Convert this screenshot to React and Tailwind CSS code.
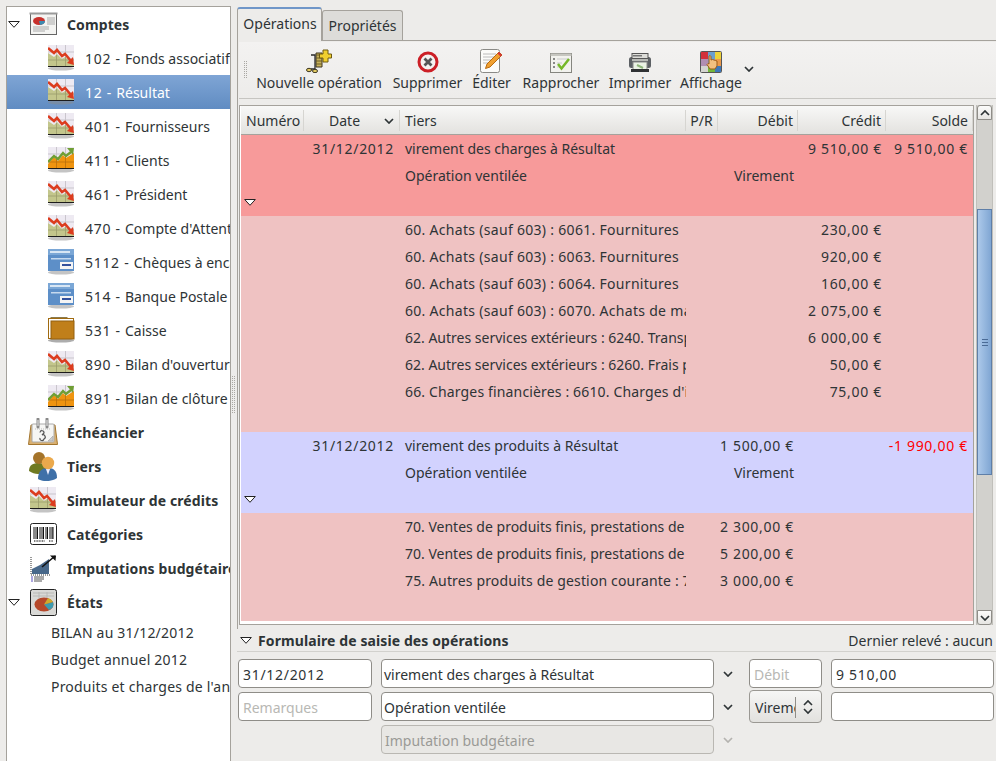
const FONT = "font-['Noto_Sans',sans-serif]"

// --- petites icones dessinees ---

function ChartDown() {
  return (
    <svg width="27" height="26" viewBox="0 0 27 26" className="shrink-0">
      <ellipse cx="13" cy="23.5" rx="13" ry="2" fill="#8a8a8a" opacity="0.5" />
      <rect x="0" y="0" width="26" height="21" fill="#eeeaf2" />
      <path d="M8.5 0V21M17.5 0V21M0 7H26M0 14H26" stroke="#c9c5cc" strokeWidth="1" />
      <path d="M0 8L6 12L9 9L14 14L17 12L26 20V21H0Z" fill="#c3c68c" />
      <path d="M8.5 10V21M17.5 12V21M0 15H26" stroke="#9a9c6c" strokeWidth="0.8" />
      <path d="M0 3L6 8L9 5L14 11L17 9L23 16" fill="none" stroke="#dc3c1e" strokeWidth="2.6" />
      <path d="M19 18L26 20L25 12Z" fill="#dc3c1e" />
      <rect x="0" y="21" width="26" height="1" fill="#1c1c1c" />
    </svg>
  )
}

function ChartUp() {
  return (
    <svg width="27" height="26" viewBox="0 0 27 26" className="shrink-0">
      <ellipse cx="13" cy="23.5" rx="13" ry="2" fill="#8a8a8a" opacity="0.5" />
      <rect x="0" y="0" width="26" height="21" fill="#eeeaf2" />
      <path d="M8.5 0V21M17.5 0V21M0 7H26M0 14H26" stroke="#c9c5cc" strokeWidth="1" />
      <path d="M0 17L6 10L10 14L15 8L18 11L26 6V21H0Z" fill="#ef9410" />
      <path d="M8.5 12V21M17.5 10V21M0 15H26" stroke="#b9700c" strokeWidth="0.8" />
      <path d="M0 15L6 9L10 12L15 6L18 9L23 5" fill="none" stroke="#6f9e34" strokeWidth="2.4" />
      <path d="M19 1L26 1L25 8Z" fill="#6f9e34" />
      <rect x="0" y="21" width="26" height="1" fill="#1c1c1c" />
    </svg>
  )
}

function BankCard() {
  return (
    <svg width="27" height="26" viewBox="0 0 27 26" className="shrink-0">
      <ellipse cx="13" cy="23.5" rx="13" ry="2" fill="#8a8a8a" opacity="0.5" />
      <rect x="0" y="0" width="26" height="22" fill="#5d8fc8" />
      <rect x="0" y="0" width="26" height="6" fill="#7ba7d6" />
      <rect x="2" y="2" width="20" height="2" fill="#d8e6f4" />
      <rect x="3" y="9" width="20" height="1.5" fill="#c6d9ee" />
      <rect x="12" y="13" width="13" height="7" fill="#f4f4f4" />
      <rect x="14" y="15" width="9" height="2" fill="#33509c" />
    </svg>
  )
}

function Cash() {
  return (
    <svg width="27" height="26" viewBox="0 0 27 26" className="shrink-0">
      <ellipse cx="13" cy="23.5" rx="13" ry="2" fill="#777" opacity="0.6" />
      <rect x="3" y="0.5" width="16" height="5" fill="#f2f0e8" stroke="#8a7a50" />
      <rect x="0.5" y="1.5" width="25" height="20" fill="#fff" stroke="#a06a10" />
      <rect x="3" y="4" width="23" height="18" fill="#c07f1a" stroke="#94600f" />
    </svg>
  )
}

function Presentation() {
  return (
    <svg width="29" height="24" viewBox="0 0 29 24">
      <rect x="1.5" y="1.5" width="26" height="21" fill="#f4f4f2" stroke="#666" />
      <rect x="0.5" y="0.5" width="28" height="2" fill="#9a9a9a" />
      <ellipse cx="10" cy="9" rx="6" ry="4" fill="#c8302c" />
      <path d="M10 9L16 9A6 4 0 0 1 11 13Z" fill="#3f8ab0" />
      <path d="M18 6H26M18 8H26M18 10H26M18 12H26M4 15H20M4 17H20M4 19H16" stroke="#aaa" />
    </svg>
  )
}

function Calendar() {
  return (
    <svg width="30" height="28" viewBox="0 0 30 28">
      <path d="M3 7H27L29.5 26.5H0.5Z" fill="#d9b071" stroke="#a3752e" />
      <rect x="4" y="6" width="22" height="18" rx="1" fill="#f6f6f4" stroke="#aaa" />
      <path d="M10 1V9M19 1V9" stroke="#888" strokeWidth="3" strokeLinecap="round" />
      <path d="M10 2V8M19 2V8" stroke="#eee" strokeWidth="1" />
      <path d="M7 11H23" stroke="#bbb" strokeDasharray="1 1" />
      <path d="M17 14.5A2 2 0 0 1 21 15L19 17A2 2 0 0 1 21 21A2 2 0 0 1 17 20" transform="translate(-5 0)" fill="none" stroke="#555" strokeWidth="1.2" />
      <path d="M20 23L25 18V23Z" fill="#ccc" stroke="#999" strokeWidth="0.5" />
    </svg>
  )
}

function People() {
  return (
    <svg width="29" height="29" viewBox="0 0 29 29">
      <path d="M0 19C0 13 4 11 10 11C15 11 18 14 18 19C12 23 6 23 0 19Z" fill="#6f7a22" />
      <circle cx="10" cy="6" r="6" fill="#a5742a" />
      <path d="M9 27C9 19 13 16 19 16C25 16 28 19 28 26C22 30 14 30 9 27Z" fill="#3f70a8" />
      <path d="M17 17H21L19 23Z" fill="#eef" />
      <circle cx="19" cy="11" r="6.2" fill="#eba94c" />
    </svg>
  )
}

function Barcode() {
  return (
    <svg width="27" height="22" viewBox="0 0 27 22">
      <rect x="0.5" y="0.5" width="26" height="21" rx="2" fill="#fff" stroke="#222" />
      <path d="M4 4V16M6 4V16M7.5 4V16M10 4V16M12 4V16M13.5 4V16M16 4V16M17.5 4V16M20 4V16M22 4V16M23 4V16" stroke="#111" strokeWidth="1" />
      <path d="M4 18H15M19 18H23" stroke="#555" strokeWidth="1.4" strokeDasharray="1 .6" />
    </svg>
  )
}

function Budget() {
  return (
    <svg width="27" height="27" viewBox="0 0 27 27">
      <path d="M1 2V20H20" fill="none" stroke="#333" strokeDasharray="1 1" />
      <path d="M2 14L10 10L19 4V19H2Z" fill="#48688a" />
      <path d="M12 12L25 1" stroke="#111" strokeWidth="1.6" />
      <path d="M20 0.5L26 0.5L25.5 6Z" fill="#111" />
      <path d="M4 22H14M4 24H14M4 26H12" stroke="#555" />
      <path d="M1 22H3M1 24H3M1 26H3" stroke="#5a4fc0" />
    </svg>
  )
}

function ReportIcon() {
  return (
    <svg width="27" height="27" viewBox="0 0 27 27">
      <rect x="0.5" y="0.5" width="26" height="26" rx="2" fill="#d9d9d6" stroke="#222" />
      <path d="M3 7H24M3 4H24M9 3V11M17 3V11" stroke="#b9b9b6" />
      <ellipse cx="14" cy="15.5" rx="9.5" ry="7" fill="#b5482a" />
      <path d="M14 15.5L23 13A9.5 7 0 0 1 19 21Z" fill="#3d9bb0" />
      <path d="M14 15.5L18 9A9.5 7 0 0 1 23 13Z" fill="#d0a92e" />
    </svg>
  )
}

function Triangle({ className = '' }) {
  return (
    <svg width="12" height="7" viewBox="0 0 12 7" className={className}>
      <path d="M0.7 0.5H11.3L6 6.3Z" fill="#fff" stroke="#222" />
    </svg>
  )
}

function Chevron({ color = '#2e3436' }) {
  return (
    <svg width="10" height="6" viewBox="0 0 10 6">
      <path d="M1 1L5 5L9 1" fill="none" stroke={color} strokeWidth="1.7" />
    </svg>
  )
}

function DotGrip({ cols, rows }) {
  const dots = []
  for (let c = 0; c < cols; c++) {
    for (let r = 0; r < rows; r++) {
      dots.push(<rect key={c + '-' + r} x={c * 2} y={r * 2} width="1" height="1" fill="#a9a7a2" />)
    }
  }
  return (
    <svg width={cols * 2} height={rows * 2}>
      {dots}
    </svg>
  )
}

// --- barre d'outils ---

function IconNew() {
  return (
    <svg width="26" height="24" viewBox="0 0 26 24">
      <path d="M10 4H16V18H10Z" fill="#c9b25a" stroke="#3c3520" />
      <path d="M10 6H16M10 9H16M10 12H16M10 15H16" stroke="#6b5d28" />
      <path d="M5 6H9V20H5" fill="none" stroke="#2a2a2a" strokeWidth="1.3" />
      <ellipse cx="3" cy="21" rx="2.5" ry="1.7" fill="#e3cb62" stroke="#3c3520" />
      <ellipse cx="9" cy="22" rx="2.5" ry="1.7" fill="#e3cb62" stroke="#3c3520" />
      <path d="M17 1H22V5H25.5V9H22V13H17V9H13.5V5H17Z" fill="#f0cf2f" stroke="#6e5a10" />
    </svg>
  )
}

function IconDelete() {
  return (
    <svg width="22" height="22" viewBox="0 0 22 22">
      <circle cx="11" cy="11" r="9" fill="#f4f2f0" stroke="#cc1f26" strokeWidth="3" />
      <path d="M7.5 7.5L14.5 14.5M14.5 7.5L7.5 14.5" stroke="#555" strokeWidth="2.8" />
    </svg>
  )
}

function IconEdit() {
  return (
    <svg width="23" height="24" viewBox="0 0 23 24">
      <rect x="0.5" y="0.5" width="19" height="23" rx="2" fill="#fbfbf9" stroke="#8a8a86" />
      <path d="M3 5H16M3 8H14M3 11H11M3 14H9" stroke="#bbb" />
      <path d="M19 3L22 6L10 18L5.5 19.5L7 15Z" fill="#f0a030" stroke="#b76a10" />
      <path d="M19 3L22 6L20.5 7.5L17.5 4.5Z" fill="#d6333a" />
    </svg>
  )
}

function IconCheck() {
  return (
    <svg width="22" height="20" viewBox="0 0 22 20">
      <rect x="0.5" y="0.5" width="21" height="19" fill="#f2f2ee" stroke="#85857f" />
      <rect x="0.5" y="0.5" width="21" height="2.5" fill="#c6c6c0" />
      <path d="M3 6H5M3 10H5M3 14H5" stroke="#666" strokeWidth="1.5" />
      <path d="M7 6H19M7 10H12M7 14H10" stroke="#ccc" />
      <path d="M8 11L11.5 15.5L19 6" fill="none" stroke="#76b82a" strokeWidth="2.5" />
    </svg>
  )
}

function IconPrint() {
  return (
    <svg width="22" height="20" viewBox="0 0 22 20">
      <rect x="0" y="4" width="22" height="11" rx="2.5" fill="#5c6064" />
      <rect x="3" y="0.5" width="16" height="5" fill="#dcdcd8" stroke="#555" />
      <rect x="4" y="2" width="9" height="1.5" fill="#777" />
      <rect x="3" y="6" width="16" height="2" fill="#b8bab6" />
      <rect x="4" y="9" width="14" height="9" fill="#eaf2e4" stroke="#888" />
      <path d="M8 12L14 15" stroke="#8fb67a" strokeWidth="2" />
      <rect x="2" y="16" width="18" height="3" fill="#2f3133" />
    </svg>
  )
}

function IconDisplay() {
  return (
    <svg width="22" height="22" viewBox="0 0 22 22">
      <rect x="0.5" y="0.5" width="21" height="21" rx="1" fill="#ddd" stroke="#555" />
      <rect x="1" y="1" width="7" height="7" fill="#d2303a" />
      <rect x="8" y="1" width="7" height="7" fill="#6a9fd0" />
      <rect x="15" y="1" width="6" height="7" fill="#edd23a" />
      <rect x="1" y="8" width="7" height="7" fill="#b08eb2" />
      <rect x="8" y="8" width="7" height="7" fill="#7aa6d0" />
      <rect x="15" y="8" width="6" height="7" fill="#eb9a4c" />
      <rect x="1" y="15" width="7" height="6" fill="#d4d4d0" />
      <rect x="8" y="15" width="7" height="6" fill="#74b83a" />
      <rect x="15" y="15" width="6" height="6" fill="#3f78b8" />
      <path d="M9 5C10 4 11 5 11 6V9L12.5 8.5L14 9L15.5 9.5L17 10V15L15 18H10L7 13.5L8 12.5L9 13Z" fill="#f2c080" stroke="#9c5a18" />
    </svg>
  )
}

function ToolButton({ icon, label, width }) {
  return (
    <div className={`flex flex-col items-center shrink-0 ${width}`}>
      <div className="h-[26px] w-full flex items-end justify-center">{icon}</div>
      <span className="mt-[1px] mb-[1px] whitespace-nowrap leading-[18px]">{label}</span>
    </div>
  )
}

// --- arbre de gauche ---

const COMPTES = [
  { code: '102', label: 'Fonds associatif', Icon: ChartDown },
  { code: '12', label: 'Résultat', Icon: ChartDown, selected: true },
  { code: '401', label: 'Fournisseurs', Icon: ChartDown },
  { code: '411', label: 'Clients', Icon: ChartUp },
  { code: '461', label: 'Président', Icon: ChartDown },
  { code: '470', label: "Compte d'Attente", Icon: ChartDown },
  { code: '5112', label: 'Chèques à encaisser', Icon: BankCard },
  { code: '514', label: 'Banque Postale', Icon: BankCard },
  { code: '531', label: 'Caisse', Icon: Cash },
  { code: '890', label: "Bilan d'ouverture", Icon: ChartDown },
  { code: '891', label: 'Bilan de clôture', Icon: ChartUp },
]

const RUBRIQUES = [
  { label: 'Échéancier', Icon: Calendar },
  { label: 'Tiers', Icon: People },
  { label: 'Simulateur de crédits', Icon: ChartDown },
  { label: 'Catégories', Icon: Barcode },
  { label: 'Imputations budgétaires', Icon: Budget },
]

function TopRow({ label, Icon, arrow }) {
  return (
    <div className="h-[34px] flex items-center">
      <div className="w-[14px] shrink-0 flex justify-center">{arrow && <Triangle />}</div>
      <div className="w-[46px] shrink-0 flex justify-center pr-[2px]">
        <Icon />
      </div>
      <span className="font-bold whitespace-nowrap tracking-[0.1px]">{label}</span>
    </div>
  )
}

function Sidebar() {
  return (
    <div className="w-[225px] h-[755px] mt-[6px] ml-[6px] shrink-0 bg-white border-x border-t border-[#a5a29c] overflow-hidden">
      <TopRow label="Comptes" Icon={Presentation} arrow />
      {COMPTES.map(({ code, label, Icon, selected }) => (
        <div
          key={code}
          className={`h-[34px] flex items-center pl-[41px] whitespace-nowrap ${
            selected ? 'bg-gradient-to-b from-[#7fa5d5] to-[#608cc2] text-white' : ''
          }`}
        >
          <Icon />
          <span className="ml-[10px]">
            <span className="tracking-[0.7px]">{code} - </span>
            {label}
          </span>
        </div>
      ))}
      {RUBRIQUES.map((r) => (
        <TopRow key={r.label} {...r} />
      ))}
      <TopRow label="États" Icon={ReportIcon} arrow />
      {['BILAN au 31/12/2012', 'Budget annuel 2012', "Produits et charges de l'année 2012"].map((t) => (
        <div key={t} className="h-[27px] flex items-center pl-[44px] whitespace-nowrap tracking-[0.2px]">
          {t}
        </div>
      ))}
    </div>
  )
}

// --- tableau des operations ---

const RED = 'bg-[#f79a9a]'
const PINK = 'bg-[#efc2c2]'
const BLUE = 'bg-[#d2d2fe]'
const T_30 = 'tracking-[0.3px]'
const T_15 = 'tracking-[0.15px]'

const ROWS = [
  { bg: RED, date: '31/12/2012', tiers: 'virement des charges à Résultat', credit: '9 510,00 €', solde: '9 510,00 €' },
  { bg: RED, tiers: 'Opération ventilée', debit: 'Virement' },
  { bg: RED, arrow: true },
  { bg: PINK, track: T_30, tiers: '60. Achats (sauf 603) : 6061. Fournitures', credit: '230,00 €' },
  { bg: PINK, track: T_30, tiers: '60. Achats (sauf 603) : 6063. Fournitures', credit: '920,00 €' },
  { bg: PINK, track: T_30, tiers: '60. Achats (sauf 603) : 6064. Fournitures', credit: '160,00 €' },
  { bg: PINK, track: T_30, tiers: '60. Achats (sauf 603) : 6070. Achats de marchandises', credit: '2 075,00 €' },
  { bg: PINK, tiers: '62. Autres services extérieurs : 6240. Transports', credit: '6 000,00 €' },
  { bg: PINK, tiers: '62. Autres services extérieurs : 6260. Frais postaux', credit: '50,00 €' },
  { bg: PINK, track: T_15, tiers: "66. Charges financières : 6610. Charges d'intérêts", credit: '75,00 €' },
  { bg: PINK },
  { bg: BLUE, date: '31/12/2012', tiers: 'virement des produits à Résultat', debit: '1 500,00 €', solde: '-1 990,00 €', negatif: true },
  { bg: BLUE, tiers: 'Opération ventilée', debit: 'Virement' },
  { bg: BLUE, arrow: true },
  { bg: PINK, tiers: '70. Ventes de produits finis, prestations de services', debit: '2 300,00 €' },
  { bg: PINK, tiers: '70. Ventes de produits finis, prestations de services', debit: '5 200,00 €' },
  { bg: PINK, track: T_15, tiers: '75. Autres produits de gestion courante : 758', debit: '3 000,00 €' },
  { bg: PINK },
]

const COLS = 'grid grid-cols-[63px_96px_286px_32px_80px_88px_87px]'
const NUM = 'tracking-[0.7px]'

function HeaderCell({ children, className = '' }) {
  return (
    <div className={`h-[21px] flex items-center border-r border-[#d6d5d1] ${className}`}>{children}</div>
  )
}

function OperationsTable() {
  return (
    <div className="flex-1 h-[520px] border border-[#a5a29c] bg-white overflow-hidden pl-px">
      <div className={`${COLS} h-[29px] pt-[4px] bg-gradient-to-b from-[#f8f8f7] to-[#e3e2df] border-b border-[#a5a29c]`}>
        <HeaderCell className="pl-[5px]">Numéro</HeaderCell>
        <HeaderCell className="pl-[25px] justify-between pr-[5px]">
          Date
          <Chevron />
        </HeaderCell>
        <HeaderCell className="pl-[5px]">Tiers</HeaderCell>
        <HeaderCell className="justify-center">P/R</HeaderCell>
        <HeaderCell className="justify-end pr-[4px]">Débit</HeaderCell>
        <HeaderCell className="justify-end pr-[4px]">Crédit</HeaderCell>
        <HeaderCell className="justify-end pr-[4px]">Solde</HeaderCell>
      </div>
      {ROWS.map((row, i) => (
        <div key={i} className={`${COLS} h-[27px] pt-px ${row.bg} leading-[26px] whitespace-nowrap`}>
          <div className="pl-[3px] flex items-end pb-[10px]">{row.arrow && <Triangle />}</div>
          <div className={`text-right pr-[6px] ${NUM}`}>{row.date}</div>
          <div className={`pl-[5px] overflow-hidden ${row.track || ''}`}>{row.tiers}</div>
          <div />
          <div className={`overflow-hidden flex justify-end pr-[4px] ${row.debit === 'Virement' ? '' : NUM}`}>{row.debit}</div>
          <div className={`text-right pr-[4px] ${NUM}`}>{row.credit}</div>
          <div className={`text-right pr-[5px] ${NUM} ${row.negatif ? 'text-[#ff0000]' : ''}`}>{row.solde}</div>
        </div>
      ))}
      <div className="h-[2px] bg-white" />
    </div>
  )
}

function Scrollbar() {
  return (
    <div className="w-[17px] h-[520px] ml-[2px] shrink-0 border-x border-[#c0bfba] bg-[#d2d1cd] flex flex-col">
      <div className="h-[15px] bg-gradient-to-b from-[#fbfbfa] to-[#e6e5e2] border border-[#8f8d88] rounded-t-[3px] flex items-center justify-center">
        <div className="rotate-180 flex">
          <Chevron />
        </div>
      </div>
      <div className="h-[89px]" />
      <div className="h-[266px] border border-[#5f7fa8] bg-gradient-to-r from-[#acc9ea] to-[#80a6d3] flex flex-col items-center justify-center gap-[2px]">
        <div className="w-[6px] h-px bg-[#4a6b96]" />
        <div className="w-[6px] h-px bg-[#4a6b96]" />
        <div className="w-[6px] h-px bg-[#4a6b96]" />
      </div>
      <div className="flex-1" />
      <div className="h-[15px] bg-gradient-to-b from-[#fbfbfa] to-[#e6e5e2] border border-[#8f8d88] rounded-b-[3px] flex items-center justify-center">
        <Chevron />
      </div>
    </div>
  )
}

// --- formulaire ---

function Field({ children, className = 'px-[4px]', muted, disabled }) {
  return (
    <div
      className={`h-[29px] pt-px flex items-center rounded-[4px] border overflow-hidden whitespace-nowrap ${
        disabled ? 'bg-[#e8e7e4] border-[#b9b7b2] text-[#9a9a96]' : 'bg-white border-[#8f8d88]'
      } ${muted ? 'text-[#b8b8b4]' : ''} ${className}`}
    >
      {children}
    </div>
  )
}

function Form() {
  return (
    <div className="grid grid-cols-[134px_342px_35px_73px_172px] gap-y-[4px] pl-[1px]">
      <Field className={`px-[4px] ${NUM}`}>31/12/2012</Field>
      <Field className="ml-[9px] px-[2px]">virement des charges à Résultat</Field>
      <div className="flex items-center justify-center pr-[7px]">
        <Chevron />
      </div>
      <Field muted>Débit</Field>
      <Field className={`ml-[9px] px-[4px] ${NUM}`}>9 510,00</Field>

      <Field muted>Remarques</Field>
      <Field className="ml-[9px] px-[2px]">Opération ventilée</Field>
      <div className="flex items-center justify-center pr-[7px]">
        <Chevron />
      </div>
      <div className="h-[33px] -my-[2px] pt-px flex items-center rounded-[4px] border border-[#9a9893] bg-gradient-to-b from-[#f6f6f5] to-[#e2e1de] pl-[5px] overflow-hidden">
        <span className="w-[41px] overflow-hidden whitespace-nowrap border-r border-[#8f8d88]">Virement</span>
        <svg width="12" height="16" viewBox="0 0 12 16" className="ml-[6px]">
          <path d="M2 6L6 2L10 6M2 10L6 14L10 10" fill="none" stroke="#2e3436" strokeWidth="1.6" />
        </svg>
      </div>
      <Field className="ml-[9px]" />

      <div />
      <Field disabled className="ml-[9px] px-[3px]">
        Imputation budgétaire
      </Field>
      <div className="flex items-center justify-center pr-[7px]">
        <Chevron color="#b4b3af" />
      </div>
    </div>
  )
}

export default function App() {
  return (
    <div className={`${FONT} w-[996px] h-[761px] overflow-hidden flex bg-[#edecea] text-[#2e3436] text-[14px]`}>
      <Sidebar />

      <div className="w-[6px] shrink-0 flex items-center justify-center pt-[29px]">
        <DotGrip cols={2} rows={19} />
      </div>

      <div className="w-[759px] shrink-0 flex flex-col">
        {/* onglets */}
        <div className="h-[34px] mt-[6px] flex items-end shrink-0">
          <div className="w-[85px] h-[34px] pb-[3px] pl-px flex items-center justify-center rounded-t-[3px] border-x border-[#a5a29c] border-t-2 border-t-[#6f96c8] bg-[#edecea] z-10 -mb-px">
            Opérations
          </div>
          <div className="w-[81px] h-[30px] flex items-center justify-center rounded-t-[3px] border-x border-t border-[#a5a29c] bg-[#dddcd9]">
            Propriétés
          </div>
        </div>

        {/* panneau */}
        <div className="border-l border-t border-[#a5a29c] pl-[1px] pb-[4px]">
          {/* barre d'outils */}
          <div className="h-[57px] mt-px flex items-center border-b border-[#c6c5c1] bg-gradient-to-b from-[#f3f2f1] to-[#edecea]">
            <div className="ml-[5px] mr-[2px]">
              <DotGrip cols={2} rows={9} />
            </div>
            <ToolButton width="w-[138px]" label="Nouvelle opération" icon={<IconNew />} />
            <ToolButton width="w-[79px]" label="Supprimer" icon={<IconDelete />} />
            <ToolButton width="w-[49px]" label="Éditer" icon={<IconEdit />} />
            <ToolButton width="w-[90px]" label="Rapprocher" icon={<IconCheck />} />
            <ToolButton width="w-[68px]" label="Imprimer" icon={<IconPrint />} />
            <ToolButton width="w-[74px]" label="Affichage" icon={<IconDisplay />} />
            <div className="-ml-[4px] -mt-[3px] flex">
              <Chevron />
            </div>
          </div>
          {/* tableau */}
          <div className="flex mt-[6px] pr-[3px]">
            <OperationsTable />
            <Scrollbar />
          </div>
        </div>

        {/* formulaire */}
        <div className="h-[23px] shrink-0 flex items-center justify-between px-[3px] border-b border-[#d2d1cd]">
          <div className="flex items-center gap-[6px]">
            <Triangle />
            <span className="font-bold tracking-[0.1px]">Formulaire de saisie des opérations</span>
          </div>
          <span>Dernier relevé : aucun</span>
        </div>
        <div className="mt-[7px]">
          <Form />
        </div>
      </div>
    </div>
  )
}
